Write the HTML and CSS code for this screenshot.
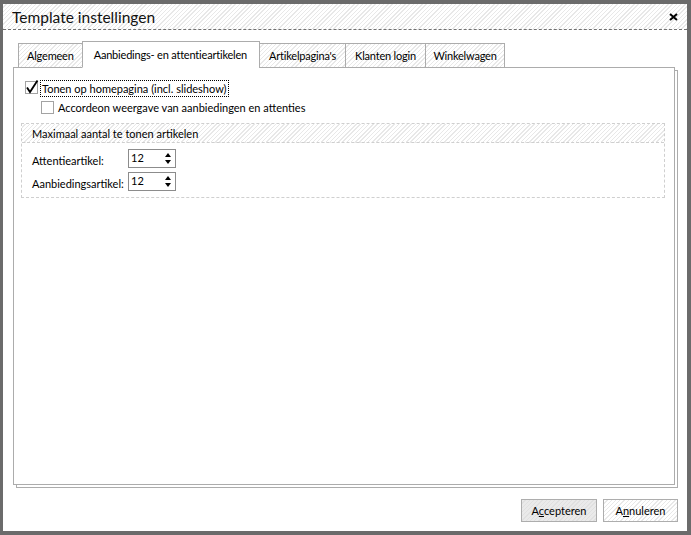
FILE: index.html
```html
<!DOCTYPE html>
<html>
<head>
<meta charset="utf-8">
<title>Template instellingen</title>
<link rel="stylesheet" href="styles.css">
</head>
<body>
<div class="window">
  <div class="titlebar hatch">
    <span class="title">Template instellingen</span>
    <svg class="close" width="9" height="8" viewBox="0 0 9 8"><path d="M1 1 L8 7 M8 1 L1 7" stroke="#000" stroke-width="2"/></svg>
  </div>
  <div class="body">
    <div class="tabs">
      <div class="tab hatch">Algemeen</div>
      <div class="tab active">Aanbiedings- en attentieartikelen</div>
      <div class="tab hatch">Artikelpagina's</div>
      <div class="tab hatch">Klanten login</div>
      <div class="tab hatch">Winkelwagen</div>
    </div>
    <div class="panel">
      <div class="check-row">
        <svg class="cb" width="14" height="14" viewBox="0 0 14 14">
          <rect x="0.5" y="1.5" width="12" height="12" fill="#fff" stroke="#a3a3a3"/>
          <path d="M2 7.5 L5 12 L12.5 0.5" fill="none" stroke="#000" stroke-width="1.8"/>
        </svg>
        <span class="focus">Tonen op homepagina (incl. slideshow)</span>
      </div>
      <div class="check-row sub">
        <span class="box"></span>
        <span>Accordeon weergave van aanbiedingen en attenties</span>
      </div>
      <div class="group">
        <div class="group-head hatch">Maximaal aantal te tonen artikelen</div>
        <div class="group-body">
          <span class="lbl">Attentieartikel:</span>
          <div class="spin"><span>12</span><span class="arrows"><i class="up"></i><i class="down"></i></span></div>
          <span class="lbl">Aanbiedingsartikel:</span>
          <div class="spin"><span>12</span><span class="arrows"><i class="up"></i><i class="down"></i></span></div>
        </div>
      </div>
    </div>
    <div class="buttons">
      <button class="btn primary">A<u>c</u>cepteren</button>
      <button class="btn hatch">A<u>n</u>nuleren</button>
    </div>
  </div>
</div>
</body>
</html>
```
FILE: styles.css
```css
html, body {
  margin: 0;
  padding: 0;
  background: #fff;
}
body {
  font-family: Lato, "Liberation Sans", sans-serif;
  font-size: 11px;
  color: #000;
}
.window {
  width: 691px;
  height: 535px;
  box-sizing: border-box;
  border: 4px solid #6b6b6b;
  border-left-width: 3px;
  background: #fff;
  display: flex;
  flex-direction: column;
}
.hatch {
  background: repeating-linear-gradient(135deg, #fff 0 2px, #e8e8e8 2px 3px);
}
.titlebar {
  height: 25px;
  border-bottom: 1px dashed #707070;
  display: flex;
  align-items: center;
  justify-content: space-between;
  padding: 0 9px 0 9px;
}
.title {
  font-size: 15.5px;
  color: #111;
  padding-top: 1px;
}
.close {
  margin-top: 1px;
}
.body {
  flex: 1;
  padding: 11px 9px 9px 10px;
  display: flex;
  flex-direction: column;
}
.tabs {
  display: flex;
  align-items: flex-end;
  padding-left: 5px;
  margin-bottom: -1px;
  position: relative;
  z-index: 1;
}
.tab {
  border: 1px solid #acacac;
  box-sizing: border-box;
  padding: 0 9px;
  display: flex;
  align-items: center;
  margin-left: -1px;
  height: 25px;
  letter-spacing: -0.2px;
}
.tab:first-child {
  margin-left: 0;
  padding: 0 8px;
}
.tab:last-child {
  padding: 0 7.5px;
}
.tab.active {
  height: 27px;
  background: #fff;
  border-bottom-color: #fff;
  padding: 0 12px 0 11px;
}
.panel {
  height: 418px;
  box-sizing: border-box;
  margin-right: 3px;
  border: 1px solid #acacac;
  background: #fff;
  box-shadow: 3px 3px 0 -1px #fff, 3px 3px 0 0 #acacac;
  padding: 12px 9px 0 7px;
}
.check-row {
  display: flex;
  align-items: center;
  height: 16px;
  margin-left: 4px;
}
.cb {
  margin-right: 2px;
  margin-top: -2px;
}
.focus {
  outline: 1px dotted #000;
  padding: 1px;
  line-height: 13px;
}
.check-row.sub {
  margin-left: 20px;
  margin-top: 3px;
}
.box {
  width: 11px;
  height: 11px;
  border: 1px solid #a3a3a3;
  margin-right: 4px;
}
.group {
  margin-top: 8px;
  border: 1px dashed #cfcfcf;
  height: 75px;
  box-sizing: border-box;
}
.group-head {
  height: 18px;
  border-bottom: 1px dashed #cfcfcf;
  display: flex;
  align-items: center;
  padding-left: 10px;
}
.group-body {
  display: grid;
  grid-template-columns: 96px 48px;
  row-gap: 4px;
  padding: 6px 10px 0 10px;
  align-items: center;
}
.lbl {
  padding-top: 3px;
}
.spin {
  height: 19px;
  box-sizing: border-box;
  border: 1px solid #8c8c8c;
  display: flex;
  justify-content: space-between;
  padding: 2px 4px 0 2px;
  line-height: 12px;
}
.arrows {
  display: flex;
  flex-direction: column;
  gap: 3px;
  padding-top: 1px;
}
.arrows i {
  display: block;
  width: 0;
  height: 0;
  border-left: 3.5px solid transparent;
  border-right: 3.5px solid transparent;
}
.arrows .up {
  border-bottom: 4px solid #000;
}
.arrows .down {
  border-top: 4px solid #000;
}
.buttons {
  margin-top: auto;
  display: flex;
  justify-content: flex-end;
  gap: 6px;
}
.btn {
  font-family: inherit;
  font-size: 11px;
  height: 23px;
  border: 1px solid #adadad;
  color: #000;
  padding: 0;
  width: 75px;
  margin: 0;
}
.btn.primary {
  width: 76px;
  background: repeating-linear-gradient(135deg, #eaeaea 0 2px, #e0e0e0 2px 3px);
}
.btn u {
  text-decoration: underline;
}
```
